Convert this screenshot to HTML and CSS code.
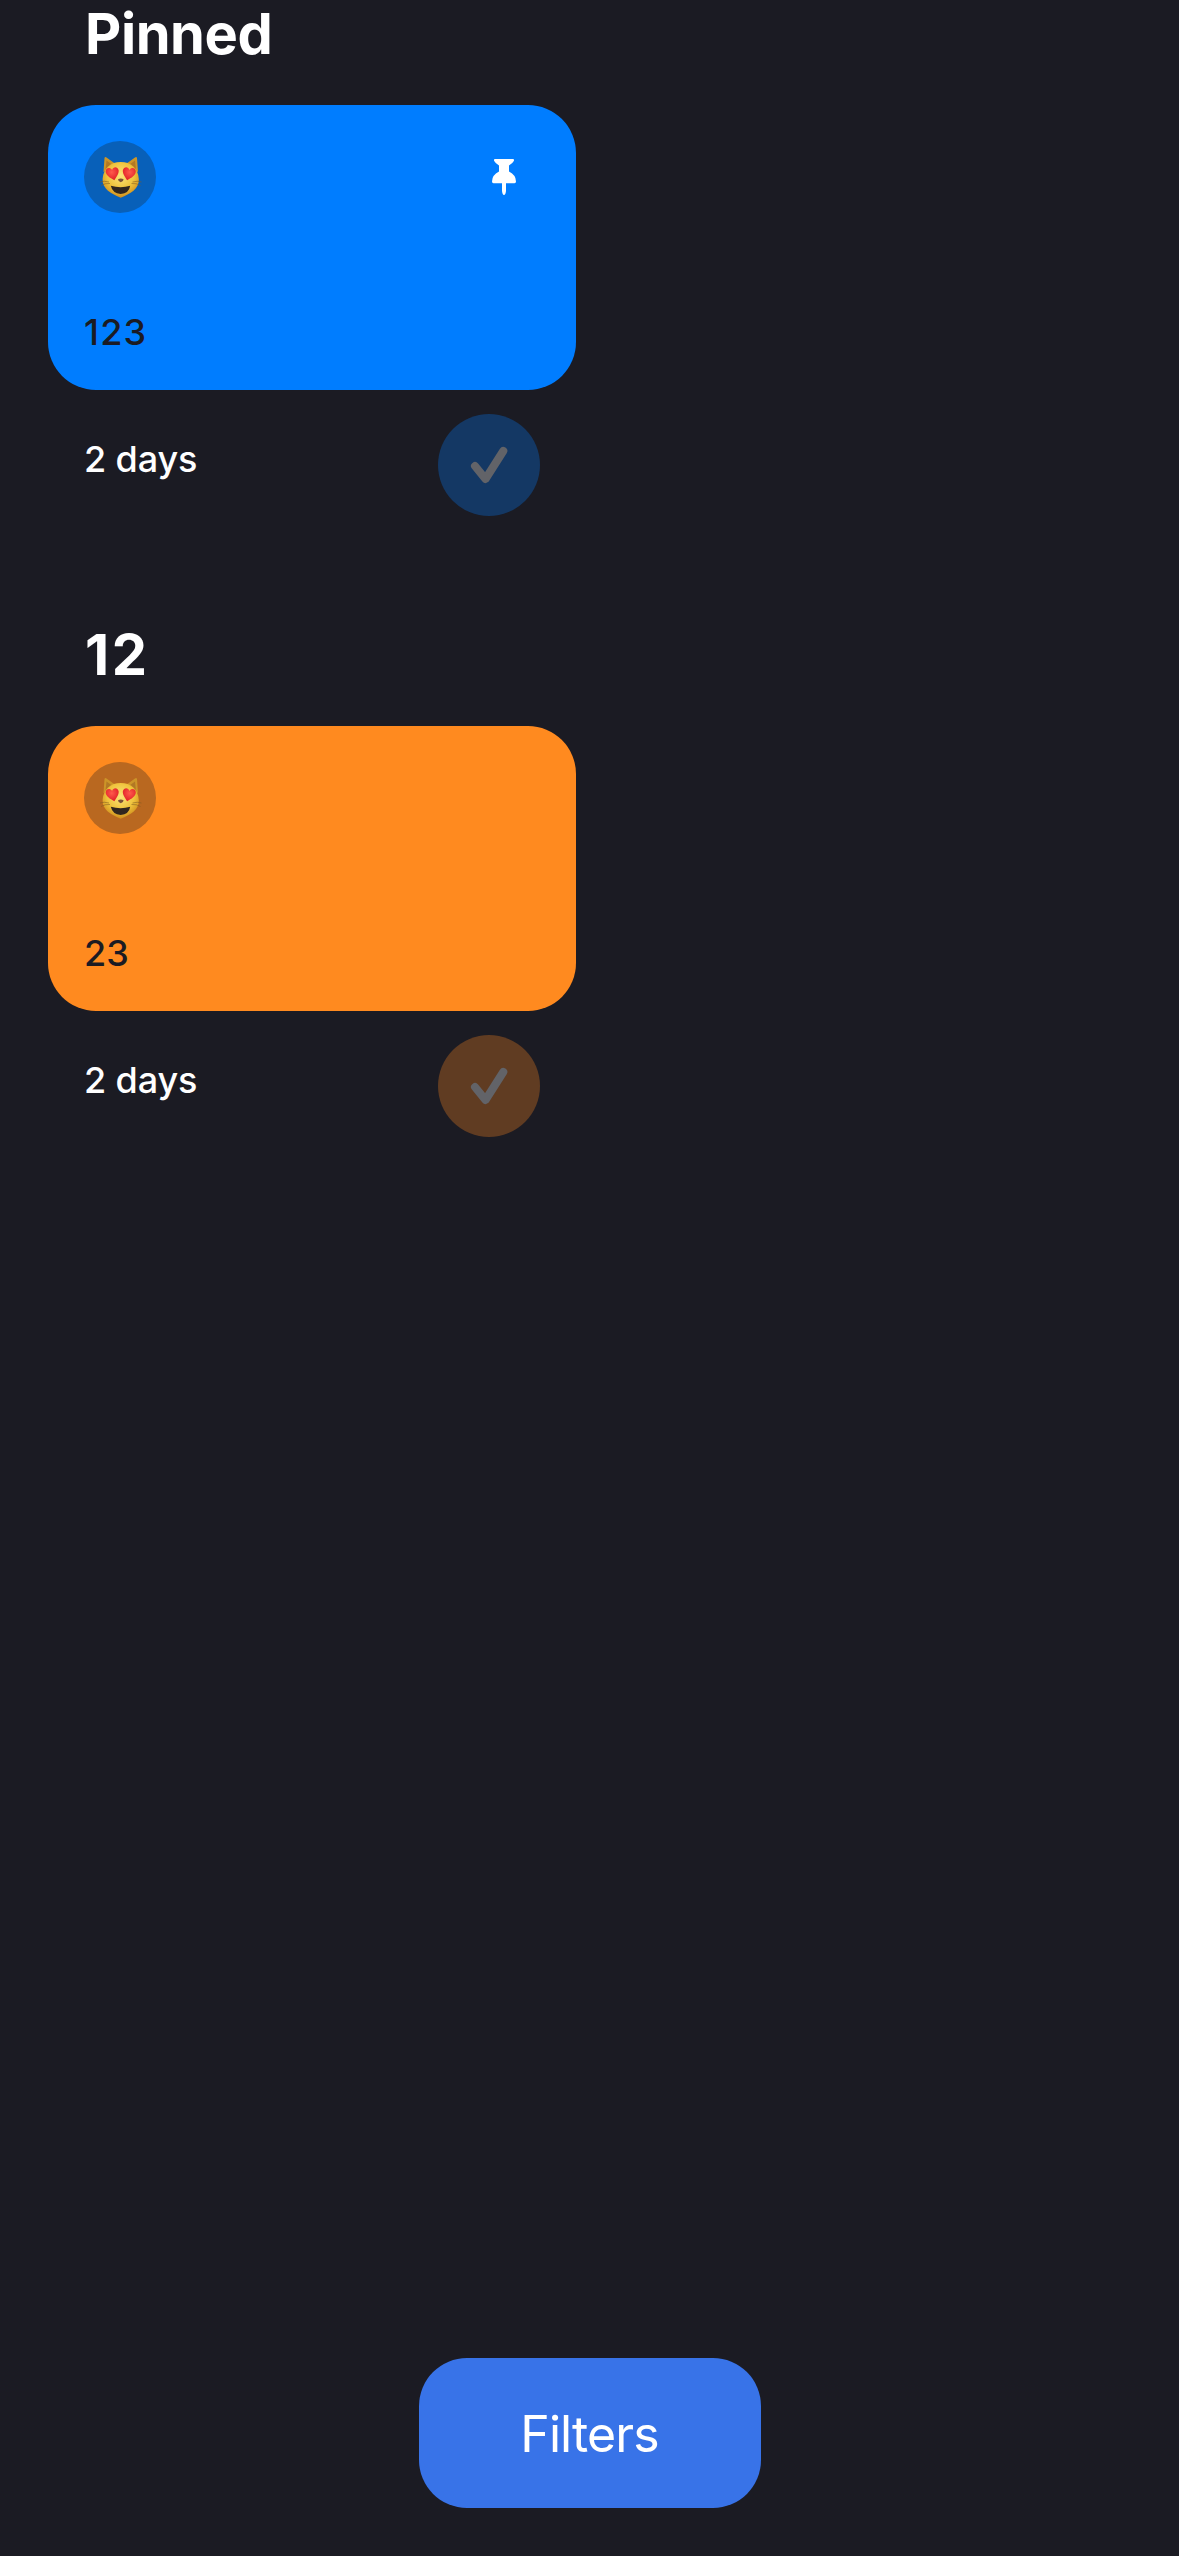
FILE: index.html
```
<!DOCTYPE html>
<html lang="en">
<head>
<meta charset="utf-8">
<title>Habits</title>
<link rel="stylesheet" href="styles.css">
</head>
<body>
<svg class="defs" aria-hidden="true">
  <defs>
    <radialGradient id="fur" cx="50%" cy="38%" r="62%">
      <stop offset="0" stop-color="#fbe47a"/>
      <stop offset=".6" stop-color="#efc33c"/>
      <stop offset="1" stop-color="#cf8d1c"/>
    </radialGradient>
    <radialGradient id="heart-fill" cx="45%" cy="35%" r="65%">
      <stop offset="0" stop-color="#ff5a4c"/>
      <stop offset="1" stop-color="#df1d25"/>
    </radialGradient>
    <path id="heart" d="M1 7C-3 4-7 1-6.5-3C-6-6.5-1.500-7 0-3.500C1.500-7 6-6.500 6.500-2.500C6.500 1 3 4.500 1 7Z"/>
    <symbol id="cat" viewBox="0 0 72 72">
      <path d="M19.500 31L20.500 17Q21 15.500 22.500 16.500L33 24ZM54 31L53 17Q52.500 15.500 51 16.500L40.500 24Z" fill="#cc9428"/>
      <path d="M21.500 29L22.500 19.500L30 25ZM52 29L51 19.500L43.500 25Z" fill="#b17825"/>
      <path d="M36.700 21C47 21 54 27 54.800 38C55.500 48 46 53 36.700 56.700C27.500 53 18 48 18.600 38C19.500 27 26.500 21 36.700 21Z" fill="url(#fur)"/>
      <path d="M16 41Q20 39.500 25 41M17 44.500Q21 42 26 42.500M57.500 41Q53.500 39.500 48.500 41M56.500 44.500Q52.500 42 47.500 42.500" fill="none" stroke="#805b22" stroke-width=".8" opacity=".7"/>
      <use href="#heart" transform="translate(28.500 32.500) rotate(-7)" fill="url(#heart-fill)"/>
      <use href="#heart" transform="translate(45 32.500) scale(-1 1) rotate(-7)" fill="url(#heart-fill)"/>
      <path d="M34 38.200Q36.800 36.800 39.600 38.200Q39.300 40.800 36.800 41.200Q34.200 40.800 34 38.200Z" fill="#795036"/>
      <path d="M26.800 44.800Q36.700 47.500 46.200 44.800Q45 52.500 36.700 53Q28.500 52.500 26.800 44.800Z" fill="#30261f"/>
    </symbol>
    <symbol id="check" viewBox="0 0 102 102">
      <path d="M37 52L47.500 65L65.300 37" fill="none" stroke="currentColor" stroke-width="8" stroke-linecap="round" stroke-linejoin="round"/>
    </symbol>
  </defs>
</svg>
<main class="screen">
  <section class="group">
    <h2 class="title">Pinned</h2>
    <article class="habit blue">
      <div class="card">
        <div class="card-top">
          <span class="avatar"><svg><use href="#cat"/></svg></span>
          <svg class="pin" viewBox="0 0 24 36"><path d="M3 0H21Q22.500 0 21.800 2Q20.500 4.500 17 6.500V12.500Q24 16 24 22.500Q24 24.200 22.500 24.200H14V32Q13.500 36 12 36Q10.500 36 10 32V24.200H1.500Q0 24.200 0 22.500Q0 16 7 12.500V6.500Q3.500 4.500 2.200 2Q1.500 0 3 0Z" fill="currentColor"/></svg>
        </div>
        <span class="name name-wide">123</span>
      </div>
      <div class="status">
        <span class="days">2 days</span>
        <span class="done"><svg><use href="#check"/></svg></span>
      </div>
    </article>
  </section>
  <section class="group">
    <h2 class="title title-number">12</h2>
    <article class="habit orange">
      <div class="card">
        <div class="card-top">
          <span class="avatar"><svg><use href="#cat"/></svg></span>
        </div>
        <span class="name">23</span>
      </div>
      <div class="status">
        <span class="days">2 days</span>
        <span class="done"><svg><use href="#check"/></svg></span>
      </div>
    </article>
  </section>
  <button class="filters" type="button">Filters</button>
</main>
</body>
</html>
```

FILE: styles.css
```
* { box-sizing: border-box; }
body {
  margin: 0;
  background: #1b1b23;
  color: #fff;
  font-family: Inter, "Liberation Sans", sans-serif;
}
svg { display: block; }
.defs { position: absolute; width: 0; height: 0; }
.screen {
  height: 2556px;
  padding: 0 48px 48px;
  display: flex;
  flex-direction: column;
  overflow: hidden;
}
.group { height: 621px; flex: none; }
.title {
  margin: 0;
  height: 105px;
  padding: 0 37px;
  font-size: 56px;
  line-height: 68px;
  font-weight: 700;
  letter-spacing: -0.4px;
}
.title-number { letter-spacing: 2.5px; }
.habit { width: 528px; }
.card {
  height: 285px;
  border-radius: 48px;
  padding: 36px;
  display: flex;
  flex-direction: column;
  justify-content: space-between;
  background: var(--card);
}
.card-top { display: flex; justify-content: space-between; }
.avatar {
  width: 72px;
  height: 72px;
  border-radius: 50%;
  background: var(--avatar);
}
.avatar svg { width: 72px; height: 72px; }
.pin { width: 24px; height: 36px; margin: 18px 24px 0 0; }
.name, .days {
  font-size: 36px;
  line-height: 44px;
  font-weight: 500;
}
.name { color: #1b1b23; }
.name-wide { letter-spacing: 1.2px; }
.status {
  display: flex;
  justify-content: space-between;
  padding: 24px 36px 0;
}
.days { padding-top: 23px; letter-spacing: -0.1px; }
.done {
  width: 102px;
  height: 102px;
  border-radius: 50%;
  background: var(--done);
  color: #626368;
}
.done svg { width: 102px; height: 102px; }
.blue { --card: #007dff; --avatar: #0860b9; --done: #143864; }
.orange { --card: #ff8a1f; --avatar: #b96820; --done: #603c22; }
.filters {
  width: 342px;
  height: 150px;
  margin: auto auto 0;
  padding: 2px 0 0;
  border: 0;
  border-radius: 48px;
  background: #3873e8;
  color: #fff;
  font: 400 50px/60px Inter, "Liberation Sans", sans-serif;
  letter-spacing: -0.9px;
}
```
